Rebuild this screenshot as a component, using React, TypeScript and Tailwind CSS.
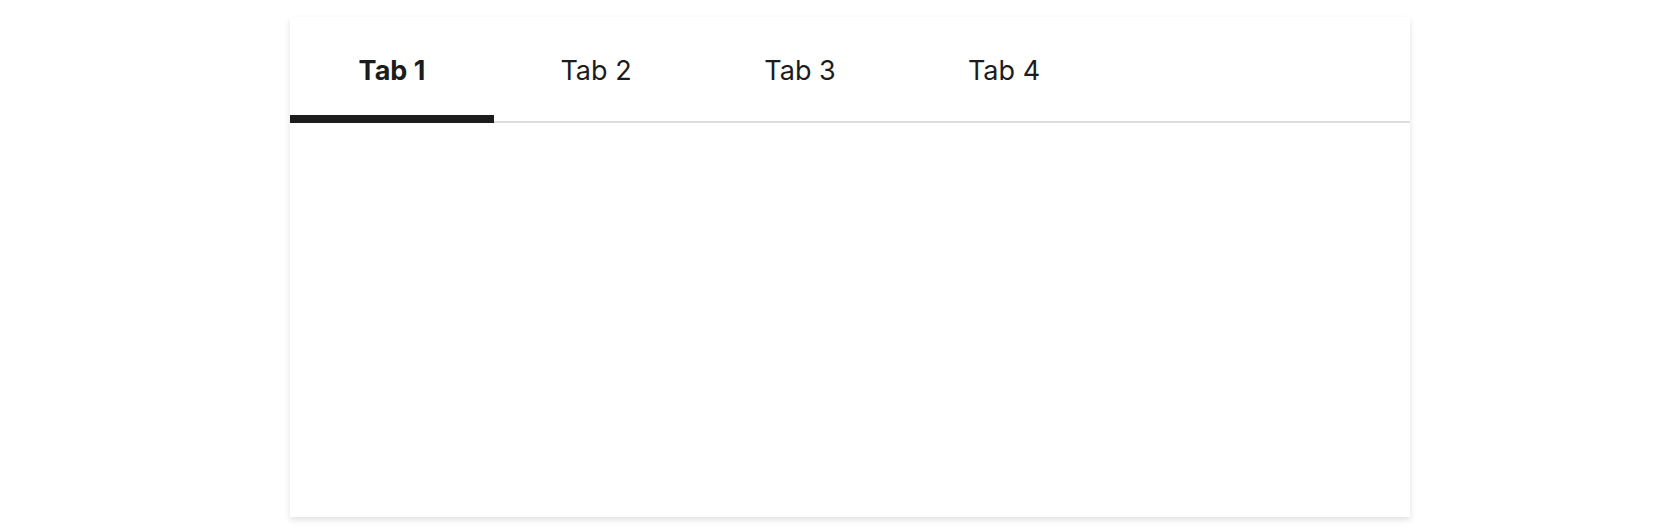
import { useState } from "react";

const TABS = ["Tab 1", "Tab 2", "Tab 3", "Tab 4"];

export default function App() {
  const [active, setActive] = useState(0);

  return (
    <div
      className="min-h-screen bg-white pt-[17px] pl-5"
      style={{ fontFamily: "Inter, 'Noto Sans', sans-serif" }}
    >
      <div className="mx-auto w-[1120px] h-[500px] bg-white shadow-[0_3px_6px_rgba(0,0,0,0.12)]">
        <div className="flex border-b-2 border-[#dddddd]">
          {TABS.map((label, i) => (
            <button
              key={label}
              onClick={() => setActive(i)}
              className={
                "w-[204px] h-[106px] -mb-[2px] pt-[38px] border-b-8 flex justify-center items-start text-[27px] leading-[32px] text-[#1c1c1c] cursor-pointer " +
                (i === active
                  ? "border-[#1c1c1c] font-bold"
                  : "border-transparent font-normal")
              }
            >
              {label}
            </button>
          ))}
        </div>
      </div>
    </div>
  );
}
